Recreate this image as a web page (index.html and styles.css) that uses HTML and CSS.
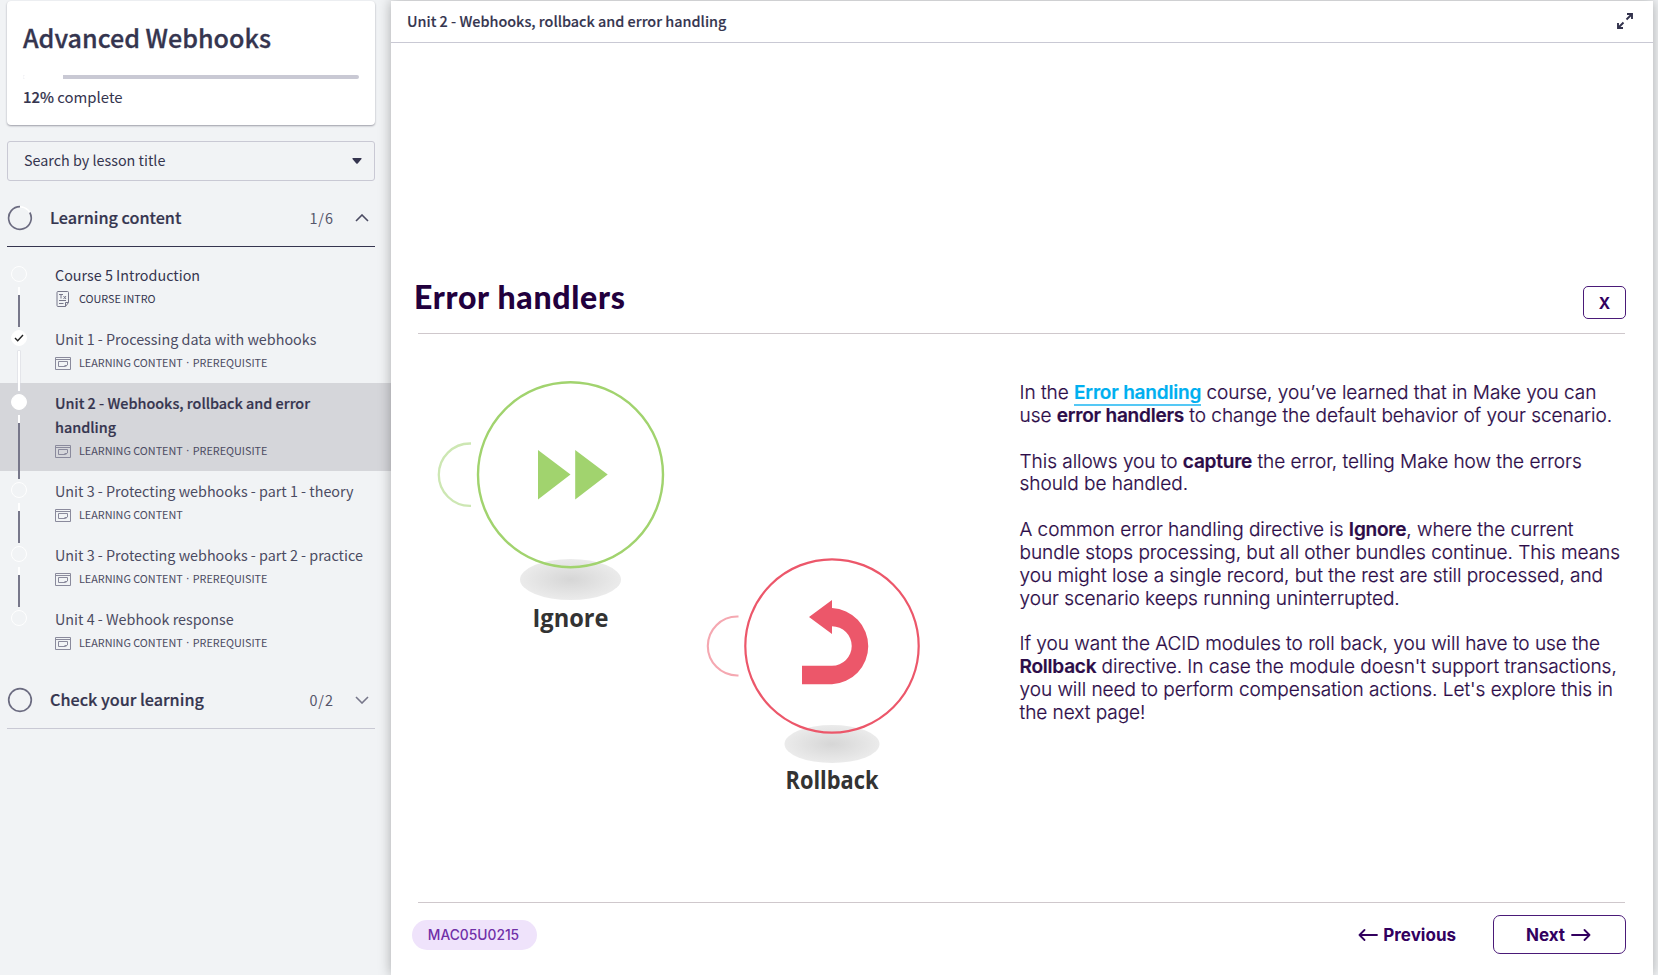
FILE: index.html
```html
<!DOCTYPE html>
<html lang="en">
<head>
<meta charset="utf-8">
<title>Advanced Webhooks</title>
<link rel="stylesheet" href="styles.css">
</head>
<body>
<svg class="defs" width="0" height="0" aria-hidden="true">
  <symbol id="lesson" viewBox="0 0 16 13">
    <path d="M.5.5h15v12H.5zM.5 2.500h15M3.500 4.500h9v3.500l-2 1.500h-7zM12 8.500h-2.500" fill="none" stroke="currentColor"/>
  </symbol>
</svg>
<div class="app">
  <aside class="sidebar">
    <div class="card">
      <h1 class="course">Advanced Webhooks</h1>
      <div class="progress"><div class="progress-done" style="width:12%"></div></div>
      <p class="percent"><b>12%</b> complete</p>
    </div>
    <div class="search"><span>Search by lesson title</span>
      <svg width="10" height="6" viewBox="0 0 10 6"><path d="M1 0h8q1 0 .5 1L5.700 5.500q-.7.700-1.400 0L.5 1Q0 0 1 0z" fill="#35354f"/></svg>
    </div>
    <div class="section open">
      <svg class="ring" width="26" height="26" viewBox="0 0 26 26"><circle cx="13" cy="13" r="11.200" fill="none" stroke="#fff" stroke-width="1.500"/><path d="M22.800 7.500A11.300 11.300 0 1 1 13 1.700" fill="none" stroke="#6b6b80" stroke-width="1.700"/></svg>
      <h2 class="section-name">Learning content</h2><span class="count">1/6</span>
      <svg class="chev" width="14" height="8" viewBox="0 0 14 8"><path d="M1 7l6-6 6 6" fill="none" stroke="#4b4b62" stroke-width="1.600"/></svg>
    </div>
    <ol class="lessons">
      <li class="lesson">
        <div class="track"><i class="dot"></i><i class="line"></i></div>
        <div class="info"><div class="name dark">Course 5 Introduction</div>
          <div class="meta dark"><svg width="16" height="16" viewBox="0 0 16 16" fill="none" stroke="#77778a"><path d="M3 .5h9.500q1 0 1 1v10L10.500 15.500H3q-1 0-1-1v-13q0-1 1-1zM13.500 11.500h-3v4M4 9.500h7M4 12.500h4.500M4 3.500h4M6 3.500v4M8.500 5l2.500 3M11 5L8.500 8"/></svg><span>COURSE INTRO</span></div></div>
      </li>
      <li class="lesson">
        <div class="track"><i class="dot full"><svg width="10" height="8" viewBox="0 0 10 8"><path d="M1 4l2.700 2.700L9 1" fill="none" stroke="#222" stroke-width="1.400"/></svg></i><i class="line white"></i></div>
        <div class="info"><div class="name">Unit 1 - Processing data with webhooks</div>
          <div class="meta"><svg width="16" height="13"><use href="#lesson"/></svg><span>LEARNING CONTENT</span><span class="sep">·</span><span>PREREQUISITE</span></div></div>
      </li>
      <li class="lesson active">
        <div class="track"><i class="dot full"></i><i class="line"></i></div>
        <div class="info"><div class="name strong">Unit 2 - Webhooks, rollback and error<br>handling</div>
          <div class="meta"><svg width="16" height="13"><use href="#lesson"/></svg><span>LEARNING CONTENT</span><span class="sep">·</span><span>PREREQUISITE</span></div></div>
      </li>
      <li class="lesson">
        <div class="track"><i class="dot"></i><i class="line"></i></div>
        <div class="info"><div class="name">Unit 3 - Protecting webhooks - part 1 - theory</div>
          <div class="meta"><svg width="16" height="13"><use href="#lesson"/></svg><span>LEARNING CONTENT</span></div></div>
      </li>
      <li class="lesson">
        <div class="track"><i class="dot"></i><i class="line"></i></div>
        <div class="info"><div class="name">Unit 3 - Protecting webhooks - part 2 - practice</div>
          <div class="meta"><svg width="16" height="13"><use href="#lesson"/></svg><span>LEARNING CONTENT</span><span class="sep">·</span><span>PREREQUISITE</span></div></div>
      </li>
      <li class="lesson">
        <div class="track"><i class="dot"></i></div>
        <div class="info"><div class="name">Unit 4 - Webhook response</div>
          <div class="meta"><svg width="16" height="13"><use href="#lesson"/></svg><span>LEARNING CONTENT</span><span class="sep">·</span><span>PREREQUISITE</span></div></div>
      </li>
    </ol>
    <div class="section">
      <svg class="ring" width="26" height="26" viewBox="0 0 26 26"><circle cx="13" cy="13" r="11.300" fill="none" stroke="#6b6b80" stroke-width="1.700"/></svg>
      <h2 class="section-name">Check your learning</h2><span class="count">0/2</span>
      <svg class="chev" width="14" height="8" viewBox="0 0 14 8"><path d="M1 1l6 6 6-6" fill="none" stroke="#77778a" stroke-width="1.600"/></svg>
    </div>
  </aside>
  <main class="main">
    <header class="topbar"><span class="unit">Unit 2 - Webhooks, rollback and error handling</span>
      <svg width="16" height="16" viewBox="0 0 16 16" fill="none" stroke="#33334d" stroke-width="1.900"><path d="M9.500 6.500L14.500 1.500M10 1h5v5M6.500 9.500L1.500 14.500M1 10v5h5"/></svg>
    </header>
    <div class="slide">
      <div class="slide-head"><h2 class="slide-title">Error handlers</h2><button class="close">X</button></div>
      <div class="slide-body">
        <svg class="art" width="602" height="568" viewBox="418 334 602 568">
          <defs><radialGradient id="shade"><stop offset="0" stop-color="#d6d6d6"/><stop offset="1" stop-color="#ebebeb"/></radialGradient></defs>
          <ellipse cx="570.500" cy="579.500" rx="50.500" ry="20.500" fill="url(#shade)"/>
          <circle cx="570.500" cy="474.700" r="92.500" fill="none" stroke="#a1d36e" stroke-width="2.400"/>
          <path d="M471 443.500h-1a31.200 31.200 0 0 0 0 62.400h1" fill="none" stroke="#cde7b3" stroke-width="2.300"/>
          <path d="M538 450l32.500 24.500L538 499.500zM575.200 450l32.500 24.500-32.500 25z" fill="#a1d36e"/>
          <text class="art-label" x="570.500" y="627" textLength="76" lengthAdjust="spacingAndGlyphs">Ignore</text>
          <ellipse cx="832" cy="744" rx="47.500" ry="19" fill="url(#shade)"/>
          <circle cx="832" cy="646" r="86.700" fill="none" stroke="#ec576a" stroke-width="2.200"/>
          <path d="M738.500 616.500h-1.200a29.500 29.500 0 0 0 0 59h1.200" fill="none" stroke="#f5a8b1" stroke-width="2.100"/>
          <path d="M832 600v8a38.200 38.200 0 0 1 0 76.300h-30v-18.500h30a19.500 19.500 0 0 0 0-39.500v7.700L809 617z" fill="#ec576a"/>
          <text class="art-label" x="832" y="789" textLength="93" lengthAdjust="spacingAndGlyphs">Rollback</text>
        </svg>
        <div class="copy">
          <p>In the <a class="link">Error handling</a> course, you’ve learned that in Make you can<br>use <b>error handlers</b> to change the default behavior of your scenario.</p>
          <p>This allows you to <b>capture</b> the error, telling Make how the errors<br>should be handled.</p>
          <p>A common error handling directive is <b>Ignore</b>, where the current<br>bundle stops processing, but all other bundles continue. This means<br>you might lose a single record, but the rest are still processed, and<br>your scenario keeps running uninterrupted.</p>
          <p>If you want the ACID modules to roll back, you will have to use the<br><b>Rollback</b> directive. In case the module doesn't support transactions,<br>you will need to perform compensation actions. Let's explore this in<br>the next page!</p>
        </div>
      </div>
      <footer class="slide-foot">
        <span class="pill">MAC05U0215</span>
        <button class="prev"><svg width="20" height="12" viewBox="0 0 20 12"><path d="M19 6H1.500M6.500 1l-5 5 5 5" fill="none" stroke="#32005f" stroke-width="1.800" stroke-linecap="round" stroke-linejoin="round"/></svg><span>Previous</span></button>
        <button class="next"><span>Next</span><svg width="20" height="12" viewBox="0 0 20 12"><path d="M1 6h17.500M13.500 1l5 5-5 5" fill="none" stroke="#32005f" stroke-width="1.800" stroke-linecap="round" stroke-linejoin="round"/></svg></button>
      </footer>
    </div>
  </main>
</div>
</body>
</html>
```
FILE: styles.css
```css
* { box-sizing: border-box; margin: 0; padding: 0; }
body { background: #f1f3f5; font-family: "Noto Sans CJK SC", "Noto Sans", sans-serif; color: #35354f; overflow: hidden; }
svg { display: block; flex: none; }
.defs { position: absolute; }
button { background: none; border: 0; font: inherit; color: inherit; }
.app { display: flex; height: 975px; }

.sidebar { width: 391px; flex: none; padding-top: 1px; }
.card { height: 124px; margin: 0 16px 16px 7px; padding: 20px 16px 0; background: #fff; border-radius: 4px; box-shadow: 0 1px 2px rgba(30, 30, 50, .4); }
.course { font-size: 25.100px; line-height: 32px; font-weight: 500; white-space: nowrap; -webkit-text-stroke: .3px currentColor; }
.progress { height: 4px; margin-top: 22px; background: #c9c9d4; border-radius: 2px; overflow: hidden; }
.progress-done { height: 4px; background: #fff; }
.percent { margin-top: 6px; font-size: 14.900px; line-height: 24px; }
.percent b { font-weight: 500; -webkit-text-stroke: .2px currentColor; }
.search { height: 40px; margin: 0 16px 0 7px; padding: 0 12px 0 16px; border: 1px solid #c9c9d4; border-radius: 3px; display: flex; align-items: center; justify-content: space-between; font-size: 14.350px; }
.search span { padding-bottom: 4px; }
.section { height: 57px; margin: 9px 16px 0 7px; display: flex; align-items: center; border-bottom: 1px solid #c9c9d4; }
.section.open { border-color: #35354f; }
.ring { width: 26px; }
.section-name { flex: 1; margin-left: 17px; padding-bottom: 2px; font-size: 16.200px; font-weight: 500; -webkit-text-stroke: .2px currentColor; }
.count { padding-bottom: 1px; font-size: 14.400px; letter-spacing: 1px; color: #55556a; }
.chev { margin: 0 6px 0 21px; }
.lessons { list-style: none; padding-top: 8px; }
.lesson { display: flex; min-height: 64px; color: #4b4b62; }
.lesson.active { background: #d5d6da; }
.track { width: 38px; flex: none; padding-top: 11px; display: flex; flex-direction: column; align-items: center; gap: 5px; }
.dot { width: 16px; height: 16px; border: 1px solid #fff; border-radius: 50%; display: flex; align-items: center; justify-content: center; }
.dot.full { background: #fff; }
.line { width: 2px; flex: 1; margin-bottom: -8px; position: relative; z-index: 1; background: linear-gradient(#fff 8px, #77778a 8px); }
.line.white { background: #fff; box-shadow: 0 0 0 .5px #d8d8df; }
.info { flex: 1; padding: 8px 0 0 17px; }
.name { font-size: 14.350px; line-height: 24px; white-space: nowrap; }
.name.strong { font-size: 14.400px; font-weight: 500; color: #35354f; -webkit-text-stroke: .2px currentColor; }
.name.dark, .meta.dark { color: #35354f; }
.meta { height: 22px; display: flex; align-items: center; font-size: 10.800px; line-height: 22px; }
.meta svg { margin-right: 8px; position: relative; top: 1px; color: #8a8a9c; }
.sep { width: 10px; text-align: center; font-family: "Noto Sans", sans-serif; }
.lesson.active .info { padding-bottom: 10px; }

.main { width: 1262px; flex: none; margin-top: 1px; background: #fff; box-shadow: 0 0 12px rgba(0, 0, 0, .3); display: flex; flex-direction: column; position: relative; z-index: 2; }
.topbar { height: 42px; padding: 0 20px 2px 16px; border-bottom: 1px solid #c9c9d4; display: flex; align-items: center; justify-content: space-between; }
.unit { font-size: 14.400px; font-weight: 500; -webkit-text-stroke: .15px currentColor; }
.slide { flex: 1; padding: 0 28px 0 27px; font-family: Inter, sans-serif; }
.slide-head { margin-top: 243px; height: 48px; display: flex; justify-content: space-between; border-bottom: 1px solid #cfc8cc; }
.slide-title { margin-left: -4px; font-family: Lato, Inter, sans-serif; font-size: 32px; line-height: 21px; font-weight: 900; letter-spacing: .7px; color: #22003d; white-space: nowrap; }
.close { width: 43px; height: 33px; margin-right: -1px; border: 1.500px solid #4a1a78; border-radius: 5px; font-size: 15.500px; line-height: 33px; font-weight: 700; color: #32005f; }
.slide-body { height: 568px; display: flex; margin-right: -20px; }
.art-label { font: 700 24.300px "Open Sans", "Noto Sans", sans-serif; fill: #333; text-anchor: middle; }
.copy { margin-left: -.5px; padding-top: 48px; font-size: 19.050px; line-height: 22.860px; font-weight: 350; letter-spacing: -.04px; color: #2c0c48; -webkit-text-stroke: .2px currentColor; white-space: nowrap; }
.copy p { margin-bottom: 22.860px; }
.copy b { font-weight: 600; letter-spacing: -.23px; }
.link { color: #00aff0; font-weight: 600; letter-spacing: -.2px; border-bottom: 2px solid #55c8f5; }
.slide-foot { border-top: 1px solid #cfc8cc; display: flex; align-items: center; padding-top: 12px; color: #32005f; font-weight: 700; font-size: 17px; }
.pill { width: 125px; height: 30px; margin-left: -6px; padding-right: 2px; border-radius: 15px; background: #efe3fb; color: #7030a8; font-size: 13.800px; line-height: 30px; font-weight: 500; text-align: center; margin-right: auto; }
.prev { display: flex; align-items: center; gap: 5px; margin-right: 37px; }
.next { width: 133px; height: 39px; margin-right: -1px; padding-right: 2px; border: 1.500px solid #4a1a78; border-radius: 7px; display: flex; align-items: center; justify-content: center; gap: 6px; }
```
